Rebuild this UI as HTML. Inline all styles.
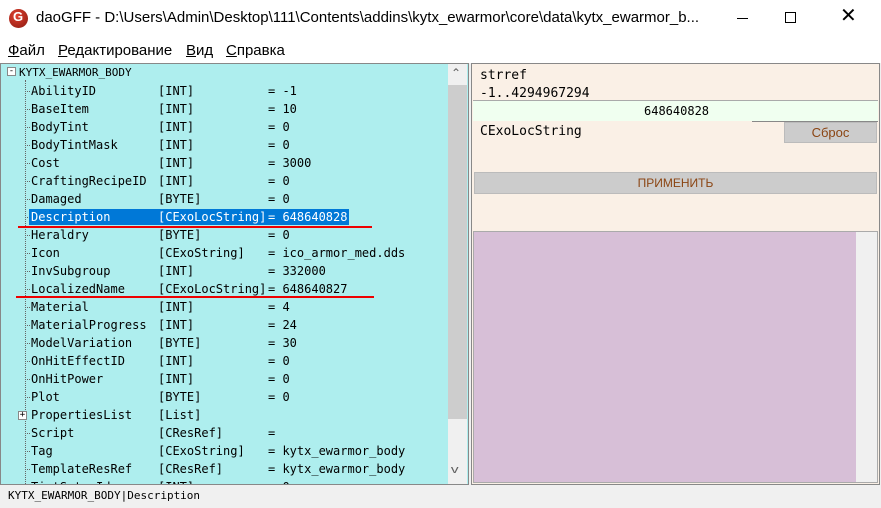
<!DOCTYPE html><html><head><meta charset="utf-8"><style>
*{margin:0;padding:0;box-sizing:border-box}
body{width:881px;height:508px;position:relative;background:#f0f0f0;font-family:"Liberation Sans",sans-serif;overflow:hidden}
.a{position:absolute}
.m{font-family:"DejaVu Sans Mono",monospace;font-size:12px;white-space:pre}
.row{position:absolute;left:0;height:18px;line-height:18px;width:440px}
.row span{position:absolute}
.n{left:31px}.t{left:158px}.v{left:268px}
.dot{position:absolute;left:25px;width:5px;border-top:1px dotted #666;top:9px}
.mn{position:absolute;top:42px;font-size:15px;white-space:pre}
</style></head><body>
<div class="a" style="left:0;top:0;width:881px;height:38px;background:#fff"></div>
<div class="a" style="left:9px;top:9px;width:19px;height:19px;border-radius:50%;background:radial-gradient(circle at 40% 35%,#e04030,#8a1a10);"></div>
<div class="a" style="left:13px;top:9px;font:bold 13px 'Liberation Sans';color:#fff">G</div>
<div class="a" style="left:36px;top:9px;font-size:15px;color:#000;white-space:nowrap">daoGFF - D:\Users\Admin\Desktop\111\Contents\addins\kytx_ewarmor\core\data\kytx_ewarmor_b...</div>
<div class="a" style="left:737px;top:18px;width:11px;border-top:1px solid #000"></div>
<div class="a" style="left:785px;top:12px;width:11px;height:11px;border:1px solid #000"></div>
<div class="a" style="left:840px;top:6px;font-size:20px;line-height:20px;color:#000">✕</div>
<div class="a" style="left:0;top:38px;width:881px;height:25px;background:#fff"></div>
<div class="mn" style="left:8px"><u>Ф</u>айл</div>
<div class="mn" style="left:58px"><u>Р</u>едактирование</div>
<div class="mn" style="left:186px"><u>В</u>ид</div>
<div class="mn" style="left:226px"><u>С</u>правка</div>
<!-- left panel -->
<div class="a" style="left:0;top:63px;width:469px;height:422px;border:1px solid #888;background:#aeeeee"></div>
<div class="a" style="left:448px;top:64px;width:19px;height:420px;background:#f0f0f0"></div>
<div class="a" style="left:448px;top:85px;width:19px;height:334px;background:#cdcdcd"></div>
<div class="a" style="left:451px;top:66px;font-size:12px;color:#606060">⌃</div>
<div class="a" style="left:452px;top:464px;font-size:11px;color:#606060;transform:scaleX(1.4)">v</div>
<div class="a" style="left:25px;top:80px;height:404px;border-left:1px dotted #666"></div>
<div class="a" style="left:7px;top:67px;width:9px;height:9px;border:1px solid #888;background:#fff;font:9px/7px monospace;text-align:center">-</div>
<div class="a m" style="left:19px;top:66px;font-size:11px">KYTX_EWARMOR_BODY</div>
<div class="a m" style="left:0;top:82px;width:447px;height:402px;overflow:hidden">
<div class="row" style="top:0"><i class="dot"></i><span class="n">AbilityID</span><span class="t">[INT]</span><span class="v">= -1</span></div>
<div class="row" style="top:18px"><i class="dot"></i><span class="n">BaseItem</span><span class="t">[INT]</span><span class="v">= 10</span></div>
<div class="row" style="top:36px"><i class="dot"></i><span class="n">BodyTint</span><span class="t">[INT]</span><span class="v">= 0</span></div>
<div class="row" style="top:54px"><i class="dot"></i><span class="n">BodyTintMask</span><span class="t">[INT]</span><span class="v">= 0</span></div>
<div class="row" style="top:72px"><i class="dot"></i><span class="n">Cost</span><span class="t">[INT]</span><span class="v">= 3000</span></div>
<div class="row" style="top:90px"><i class="dot"></i><span class="n">CraftingRecipeID</span><span class="t">[INT]</span><span class="v">= 0</span></div>
<div class="row" style="top:108px"><i class="dot"></i><span class="n">Damaged</span><span class="t">[BYTE]</span><span class="v">= 0</span></div>
<div class="row" style="top:126px"><i class="dot"></i><span style="left:29px;top:1px;width:320px;height:16px;background:#0078d7"></span><span class="n" style="color:#fff">Description</span><span class="t" style="color:#fff">[CExoLocString]</span><span class="v" style="color:#fff">= 648640828</span></div>
<div class="row" style="top:144px"><i class="dot"></i><span class="n">Heraldry</span><span class="t">[BYTE]</span><span class="v">= 0</span></div>
<div class="row" style="top:162px"><i class="dot"></i><span class="n">Icon</span><span class="t">[CExoString]</span><span class="v">= ico_armor_med.dds</span></div>
<div class="row" style="top:180px"><i class="dot"></i><span class="n">InvSubgroup</span><span class="t">[INT]</span><span class="v">= 332000</span></div>
<div class="row" style="top:198px"><i class="dot"></i><span class="n">LocalizedName</span><span class="t">[CExoLocString]</span><span class="v">= 648640827</span></div>
<div class="row" style="top:216px"><i class="dot"></i><span class="n">Material</span><span class="t">[INT]</span><span class="v">= 4</span></div>
<div class="row" style="top:234px"><i class="dot"></i><span class="n">MaterialProgress</span><span class="t">[INT]</span><span class="v">= 24</span></div>
<div class="row" style="top:252px"><i class="dot"></i><span class="n">ModelVariation</span><span class="t">[BYTE]</span><span class="v">= 30</span></div>
<div class="row" style="top:270px"><i class="dot"></i><span class="n">OnHitEffectID</span><span class="t">[INT]</span><span class="v">= 0</span></div>
<div class="row" style="top:288px"><i class="dot"></i><span class="n">OnHitPower</span><span class="t">[INT]</span><span class="v">= 0</span></div>
<div class="row" style="top:306px"><i class="dot"></i><span class="n">Plot</span><span class="t">[BYTE]</span><span class="v">= 0</span></div>
<div class="row" style="top:324px"><span style="left:18px;top:5px;width:9px;height:9px;border:1px solid #888;background:#fff;font:9px/7px monospace;text-align:center">+</span><span class="n">PropertiesList</span><span class="t">[List]</span></div>
<div class="row" style="top:342px"><i class="dot"></i><span class="n">Script</span><span class="t">[CResRef]</span><span class="v">=</span></div>
<div class="row" style="top:360px"><i class="dot"></i><span class="n">Tag</span><span class="t">[CExoString]</span><span class="v">= kytx_ewarmor_body</span></div>
<div class="row" style="top:378px"><i class="dot"></i><span class="n">TemplateResRef</span><span class="t">[CResRef]</span><span class="v">= kytx_ewarmor_body</span></div>
<div class="row" style="top:396px"><i class="dot"></i><span class="n">TintSetupId</span><span class="t">[INT]</span><span class="v">= 0</span></div>
</div>
<div class="a" style="left:18px;top:226px;width:354px;height:2px;background:#e00"></div>
<div class="a" style="left:16px;top:296px;width:358px;height:2px;background:#e00"></div>
<!-- right panel -->
<div class="a" style="left:471px;top:63px;width:409px;height:422px;border:1px solid #888;background:#faf0e6"></div>
<div class="a m" style="left:480px;top:67px;font-size:13px;line-height:18px">strref
-1..4294967294</div>
<div class="a" style="left:473px;top:100px;width:405px;height:21px;background:#f0fff0;border-top:1px solid #aaa"></div>
<div class="a m" style="left:644px;top:104px">648640828</div>
<div class="a" style="left:752px;top:121px;width:126px;border-top:1px solid #888"></div>
<div class="a m" style="left:480px;top:124px;font-size:13px">CExoLocString</div>
<div class="a" style="left:784px;top:122px;width:93px;height:21px;background:#ccc;border:1px solid #bbb;color:#8b4513;font-size:13px;text-align:center;line-height:19px">Сброс</div>
<div class="a" style="left:474px;top:172px;width:403px;height:22px;background:#ccc;border:1px solid #bbb;color:#8b4513;font-size:12px;text-align:center;line-height:20px">ПРИМЕНИТЬ</div>
<div class="a" style="left:473px;top:231px;width:405px;height:252px;border:1px solid #aaa;background:#f0f0f0"></div>
<div class="a" style="left:474px;top:232px;width:382px;height:250px;background:#d7bfd7"></div>
<div class="a m" style="left:8px;top:489px;font-size:11px">KYTX_EWARMOR_BODY|Description</div>
</body></html>
